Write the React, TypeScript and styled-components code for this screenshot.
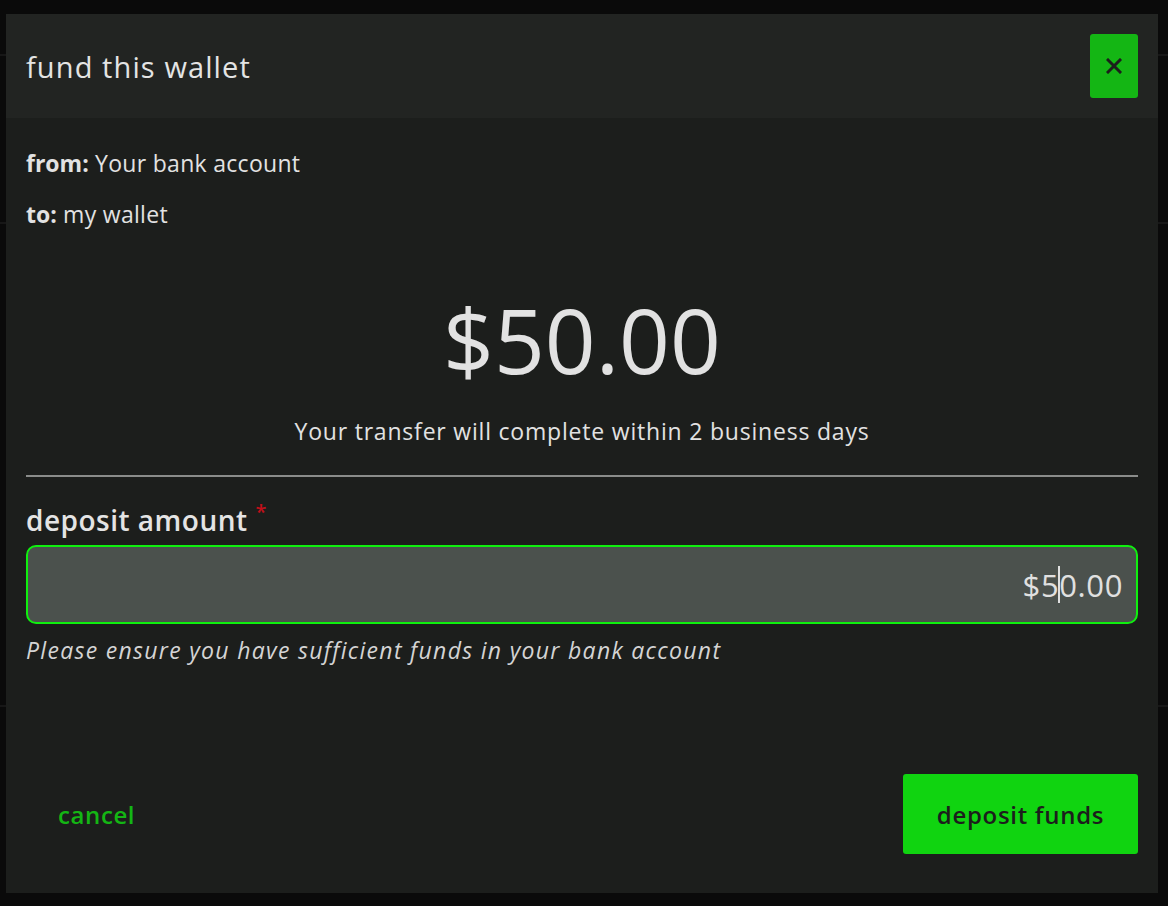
import styled, { createGlobalStyle } from 'styled-components';

const GlobalStyle = createGlobalStyle`
  html, body {
    margin: 0;
    padding: 0;
    background: #0b0b0b;
  }
  body {
    font-family: "Open Sans", "Noto Sans", sans-serif;
    color: #e2e2e2;
  }
  * {
    box-sizing: border-box;
  }
`;

const Page = styled.div`
  position: relative;
  width: 1168px;
  height: 906px;
  overflow: hidden;
  background: #1a1b1a;
`;

const PageRule = styled.div<{ top: number }>`
  height: 2px;
  background: #3a3b3a;
  margin-top: ${props => props.top}px;
`;

const Overlay = styled.div`
  position: absolute;
  inset: 0;
  background: rgba(0, 0, 0, 0.6);
  display: flex;
  align-items: flex-start;
  justify-content: center;
  padding-top: 14px;
`;

const Modal = styled.div`
  width: 1152px;
  height: 879px;
  background: #1c1e1c;
  display: flex;
  flex-direction: column;
  margin-left: -4px;
`;

const Header = styled.div`
  height: 104px;
  padding: 0 20px;
  background: #222422;
  display: flex;
  align-items: center;
  justify-content: space-between;
`;

const Title = styled.h2`
  margin: 0;
  font-size: 29px;
  font-weight: 400;
  letter-spacing: 1.1px;
  color: #e4e4e4;
`;

const CloseButton = styled.button`
  width: 48px;
  height: 64px;
  border: none;
  border-radius: 3px;
  background: #14b614;
  display: flex;
  align-items: center;
  justify-content: center;
  cursor: pointer;
  padding: 0;
`;

const Body = styled.div`
  flex: 1;
  padding: 30px 20px 0;
  display: flex;
  flex-direction: column;
`;

const InfoLine = styled.p<{ gap?: number }>`
  margin: ${props => props.gap ?? 0}px 0 0;
  font-size: 23px;
  line-height: 30px;
  letter-spacing: 0.3px;
  color: #e2e2e2;
  b {
    font-weight: 700;
    letter-spacing: 0;
  }
`;

const Amount = styled.div`
  margin-top: 61px;
  text-align: center;
  font-size: 89px;
  line-height: 100px;
  color: #e2e2e2;
`;

const Note = styled.p`
  margin: 26px 0 0;
  text-align: center;
  font-size: 23px;
  line-height: 30px;
  letter-spacing: 0.8px;
  color: #e2e2e2;
`;

const Divider = styled.hr`
  margin: 29px 0 0;
  border: none;
  height: 2px;
  background: #8a8c8a;
`;

const Label = styled.label`
  margin-top: 25px;
  font-size: 28px;
  line-height: 36px;
  font-weight: 600;
  letter-spacing: 0.5px;
  color: #e4e4e4;
  sup {
    color: #c0101a;
    font-size: 20px;
    margin-left: 8px;
    vertical-align: 12px;
    line-height: 0;
  }
`;

const AmountField = styled.div`
  margin-top: 7px;
  height: 79px;
  border: 2px solid #0ff00f;
  border-radius: 10px;
  background: #4b514d;
  display: flex;
  align-items: center;
  justify-content: flex-end;
  padding: 0 13px;
  font-size: 31px;
  letter-spacing: 0.6px;
  color: #e0e0e0;
`;

const Caret = styled.span`
  display: inline-block;
  width: 2px;
  height: 37px;
  background: #e0e0e0;
  vertical-align: middle;
  margin: 0 -1px;
`;

const Hint = styled.p`
  margin: 11px 0 0;
  font-size: 23px;
  line-height: 30px;
  font-style: italic;
  letter-spacing: 1.3px;
  color: #d4d4d4;
`;

const Footer = styled.div`
  padding: 0 20px 39px;
  display: flex;
  align-items: center;
  justify-content: space-between;
`;

const TextButton = styled.button`
  background: none;
  border: none;
  padding: 0 32px;
  height: 80px;
  font-family: inherit;
  font-size: 24px;
  font-weight: 600;
  letter-spacing: 0.6px;
  color: #14b614;
  cursor: pointer;
`;

const PrimaryButton = styled.button`
  width: 235px;
  height: 80px;
  border: none;
  border-radius: 3px;
  background: #10d410;
  font-family: inherit;
  font-size: 24px;
  font-weight: 600;
  letter-spacing: 0.7px;
  color: #1c1e1c;
  cursor: pointer;
`;

function App() {
  return (
    <>
      <GlobalStyle />
      <Page>
        <PageRule top={54} />
        <PageRule top={166} />
        <PageRule top={481} />
        <Overlay>
          <Modal>
            <Header>
              <Title>fund this wallet</Title>
              <CloseButton aria-label="close">
                <svg width="16" height="16" viewBox="0 0 16 16">
                  <path
                    d="M2 2L14 14M14 2L2 14"
                    stroke="#1c1e1c"
                    strokeWidth="3"
                    strokeLinecap="square"
                  />
                </svg>
              </CloseButton>
            </Header>
            <Body>
              <InfoLine>
                <b>from:</b> Your bank account
              </InfoLine>
              <InfoLine gap={21}>
                <b>to:</b> my wallet
              </InfoLine>
              <Amount>$50.00</Amount>
              <Note>Your transfer will complete within 2 business days</Note>
              <Divider />
              <Label>
                deposit amount<sup>*</sup>
              </Label>
              <AmountField>
                $5<Caret />0.00
              </AmountField>
              <Hint>Please ensure you have sufficient funds in your bank account</Hint>
            </Body>
            <Footer>
              <TextButton>cancel</TextButton>
              <PrimaryButton>deposit funds</PrimaryButton>
            </Footer>
          </Modal>
        </Overlay>
      </Page>
    </>
  );
}

export default App;
